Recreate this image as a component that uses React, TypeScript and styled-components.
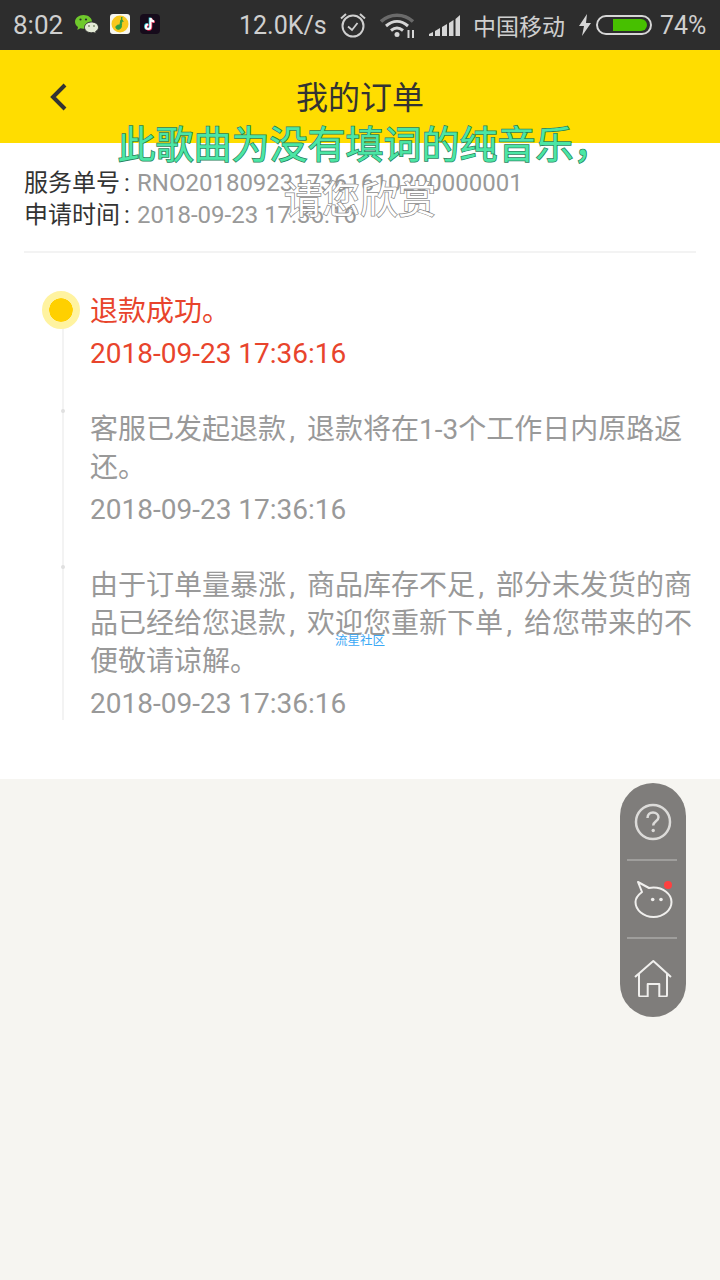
import React from "react";
import styled, { createGlobalStyle } from "styled-components";

const GlobalStyle = createGlobalStyle`
    html, body {
        margin: 0;
        padding: 0;
        background: #f6f5f1;
    }
    body {
        font-family: Roboto, "Noto Sans CJK SC", sans-serif;
    }
`;

const records = [
    {
        active: true,
        text: "退款成功。",
        time: "2018-09-23 17:36:16",
    },
    {
        active: false,
        text: "客服已发起退款,退款将在1-3个工作日内原路返还。",
        time: "2018-09-23 17:36:16",
    },
    {
        active: false,
        text: "由于订单量暴涨,商品库存不足,部分未发货的商品已经给您退款,欢迎您重新下单,给您带来的不便敬请谅解。",
        time: "2018-09-23 17:36:16",
    },
];

// commas on the device sit in a wider slot than a latin comma
const withSpacedCommas = (text: string) =>
    text.split(",").map((part, i, all) => (
        <React.Fragment key={i}>
            {part}
            {i < all.length - 1 ? <Comma>,</Comma> : null}
        </React.Fragment>
    ));

const WeChatIcon = () => (
    <svg width="26" height="24" viewBox="0 0 26 24">
        <path d="M9.500 3C4.800 3 1 6 1 9.800c0 2.200 1.200 4 3 5.200L3.300 18l3.100-1.700c1 .3 2 .4 3.100.4 4.700 0 8.500-3 8.500-6.900S14.200 3 9.500 3z" fill="#6fc92c" />
        <path d="M17.500 10c-3.900 0-7 2.400-7 5.400s3.100 5.400 7 5.400c.8 0 1.500-.1 2.200-.3l2.500 1.300-.6-2.200c1.800-1 2.900-2.500 2.900-4.200 0-3-3.100-5.400-7-5.400z" fill="#e4ead6" stroke="#2d2d2d" strokeWidth="1" />
        <circle cx="6.500" cy="7.500" r="1.100" fill="#2d2d2d" />
        <circle cx="12" cy="7.500" r="1.100" fill="#2d2d2d" />
        <circle cx="15" cy="14" r="0.900" fill="#7b8a66" />
        <circle cx="20" cy="14" r="0.900" fill="#7b8a66" />
    </svg>
);

const QQMusicIcon = () => (
    <svg width="20" height="20" viewBox="0 0 20 20">
        <rect width="20" height="20" rx="3" fill="#f7f7f2" />
        <circle cx="10" cy="10" r="8.500" fill="#f8c81e" />
        <path d="M11.800 3c-.6 2.200-.4 3.400 1.500 4.300-1.300-.2-2.100-.6-2.500-1.200l-.9 5c-2.400-.5-4.200.7-4 2.500.2 1.900 3.400 2.300 4.800.6 1-1.300.7-4 1.100-6.800z" fill="#2f9e44" stroke="#2f9e44" strokeWidth="1" />
    </svg>
);

const TikTokIcon = () => (
    <svg width="20" height="20" viewBox="0 0 20 20">
        <rect width="20" height="20" rx="4" fill="#160b1b" />
        <path d="M10.500 4v8.800a2.300 2.300 0 1 1-2.300-2.300M10.500 4c.3 2 1.600 3.300 3.700 3.500" fill="none" stroke="#36d6e0" strokeWidth="2.200" transform="translate(-.7 -.4)" />
        <path d="M10.500 4v8.800a2.300 2.300 0 1 1-2.300-2.300M10.500 4c.3 2 1.600 3.300 3.700 3.500" fill="none" stroke="#f02a55" strokeWidth="2.200" transform="translate(.7 .5)" />
        <path d="M10.500 4v8.800a2.300 2.300 0 1 1-2.300-2.300M10.500 4c.3 2 1.600 3.300 3.700 3.500" fill="none" stroke="#ffffff" strokeWidth="2" />
    </svg>
);

const AlarmIcon = () => (
    <svg width="28" height="28" viewBox="0 0 28 28" fill="none" stroke="#cfcfcf" strokeWidth="2">
        <circle cx="14" cy="15" r="10.500" />
        <path d="M9 15.500l4 3.500 5.500-7" strokeWidth="1.800" />
        <path d="M2 7.500l5-4.500M26 7.500l-5-4.500" />
    </svg>
);

const WifiIcon = () => (
    <svg width="36" height="26" viewBox="0 0 36 26">
        <path d="M1 9.500C10 1 24 1 33 9.500" fill="none" stroke="#6a6a6a" strokeWidth="3.500" />
        <path d="M6 14c7-6 15-6 22 0" fill="none" stroke="#d6d6d6" strokeWidth="3" />
        <path d="M11 18.500c4-3.300 8-3.300 12 0" fill="none" stroke="#d6d6d6" strokeWidth="3" />
        <circle cx="17" cy="22.500" r="2.500" fill="#d6d6d6" />
        <path d="M28.500 18v8M33 18v8" stroke="#d6d6d6" strokeWidth="2" />
    </svg>
);

const SignalIcon = () => (
    <svg width="31" height="21" viewBox="0 0 31 21" fill="#d6d6d6">
        <path d="M0 21v-2l4-2v4z" />
        <path d="M6 21v-5l5-3v8z" />
        <path d="M13 21v-9l5-3v12z" />
        <path d="M20 21V8l4.500-3v16z" />
        <path d="M26.500 21V4L31 0v21z" />
    </svg>
);

const BoltIcon = () => (
    <svg width="14" height="22" viewBox="0 0 14 22">
        <path d="M9 0L1 12h5l-2 10 9-13H8z" fill="#d6d6d6" />
    </svg>
);

const BackIcon = () => (
    <svg width="20" height="30" viewBox="0 0 20 30">
        <path d="M16 3L4 15l12 12" fill="none" stroke="#333333" strokeWidth="4" />
    </svg>
);

const QuestionIcon = () => (
    <svg width="38" height="38" viewBox="0 0 38 38" fill="none" stroke="#dcdbd9" strokeWidth="2.500">
        <circle cx="19" cy="19" r="17" />
        <path d="M13.500 15c0-3.300 2.400-5.500 5.500-5.500s5.500 2 5.500 4.800c0 3.900-5.300 4.200-5.300 8.200" />
        <circle cx="19.200" cy="27.500" r="1.700" fill="#dcdbd9" stroke="none" />
    </svg>
);

const CatIcon = () => (
    <svg width="40" height="38" viewBox="0 0 40 38" fill="none" stroke="#f0efed" strokeWidth="2">
        <path d="M5 1l4 10C5 14 2.500 17 2.500 21c0 8 8 15 18 15s18-7 18-15-8.500-14.500-18-14.500c-1.500 0-3 .2-4.500.5z" strokeLinejoin="round" />
        <circle cx="19.700" cy="18.500" r="1.800" fill="#f0efed" stroke="none" />
        <circle cx="28" cy="18.500" r="1.800" fill="#f0efed" stroke="none" />
    </svg>
);

const HomeIcon = () => (
    <svg width="38" height="38" viewBox="0 0 38 38" fill="none" stroke="#f0efed" strokeWidth="2" strokeLinejoin="round">
        <path d="M1 18L19.300 2 37 18" />
        <path d="M5 14.500V36a1.500 1.500 0 0 0 1.500 1.500h7.200V25h11.600v12.500h6.200A1.500 1.500 0 0 0 33 36V14.500" />
    </svg>
);

const App = () => {
    return (
        <Screen>
            <GlobalStyle />
            <StatusBar>
                <StatusTime>8:02</StatusTime>
                <NotifyIcons>
                    <WeChatIcon />
                    <QQMusicIcon />
                    <TikTokIcon />
                </NotifyIcons>
                <NetSpeed>12.0K/s</NetSpeed>
                <StatusRight>
                    <AlarmIcon />
                    <WifiIcon />
                    <SignalIcon />
                    <Carrier>中国移动</Carrier>
                    <BatteryGroup>
                        <BoltIcon />
                        <Battery>
                            <BatteryLevel />
                        </Battery>
                    </BatteryGroup>
                    <StatusPercent>74%</StatusPercent>
                </StatusRight>
            </StatusBar>

            <TitleBar>
                <BackButton>
                    <BackIcon />
                </BackButton>
                <Title>我的订单</Title>
            </TitleBar>

            <Card>
                <OrderInfo>
                    <InfoRow>
                        <InfoLabel>服务单号 :</InfoLabel>
                        <InfoValue>RNO2018092317361610200000001</InfoValue>
                    </InfoRow>
                    <InfoRow>
                        <InfoLabel>申请时间 :</InfoLabel>
                        <InfoValue>2018-09-23 17:36:16</InfoValue>
                    </InfoRow>
                </OrderInfo>

                <Timeline>
                    {records.map((record, i) => (
                        <Step key={i}>
                            {record.active ? <ActiveDot /> : <SmallDot />}
                            <StepText $active={record.active}>{withSpacedCommas(record.text)}</StepText>
                            <StepTime $active={record.active}>{record.time}</StepTime>
                        </Step>
                    ))}
                </Timeline>
            </Card>

            <FloatMenu>
                <MenuCell>
                    <QuestionIcon />
                </MenuCell>
                <MenuCell>
                    <CatIcon />
                    <RedDot />
                </MenuCell>
                <MenuCell>
                    <HomeIcon />
                </MenuCell>
            </FloatMenu>

            <Lyrics>
                <LyricLine $current>此歌曲为没有填词的纯音乐，</LyricLine>
                <LyricLine>请您欣赏</LyricLine>
            </Lyrics>
            <Watermark>流星社区</Watermark>
        </Screen>
    );
};

const Screen = styled.div`
    position: relative;
    width: 720px;
    height: 1280px;
    overflow: hidden;
    background-color: #f6f5f1;
`;
const StatusBar = styled.div`
    height: 50px;
    display: flex;
    align-items: center;
    padding: 0 12px 0 13px;
    box-sizing: border-box;
    background-color: #2d2d2d;
    color: #cfcfcf;
    font-size: 25px;
`;
const StatusTime = styled.span`
    width: 61px;
    font-size: 26px;
`;
const NotifyIcons = styled.div`
    display: flex;
    align-items: center;
    gap: 10px;
    width: 165px;
    margin-bottom: 3px;
`;
const NetSpeed = styled.span`
    width: 101px;
`;
const StatusRight = styled.div`
    display: flex;
    align-items: center;
    gap: 13px;
    flex: 1;
    margin-left: -1px;
`;
const Carrier = styled.span`
    font-size: 23px;
    white-space: nowrap;
`;
const BatteryGroup = styled.div`
    display: flex;
    align-items: center;
    gap: 4px;
`;
const Battery = styled.div`
    width: 56px;
    height: 20px;
    box-sizing: border-box;
    padding: 2px 3px 2px 15px;
    border: 2px solid #d6d6d6;
    border-radius: 10px;
`;
const BatteryLevel = styled.div`
    height: 100%;
    background-color: #47c000;
    border-radius: 0 6px 6px 0;
`;
const StatusPercent = styled.span`
    margin-left: -5px;
`;
const TitleBar = styled.div`
    position: relative;
    height: 93px;
    display: flex;
    align-items: center;
    justify-content: center;
    background-color: #ffdd00;
`;
const BackButton = styled.div`
    position: absolute;
    left: 49px;
    top: 32px;
    display: flex;
`;
const Title = styled.h1`
    margin: 0 0 3px;
    font-size: 32px;
    font-weight: 400;
    color: #333333;
`;
const Card = styled.div`
    height: 636px;
    padding: 24px 24px 0;
    box-sizing: border-box;
    background-color: #ffffff;
`;
const OrderInfo = styled.div`
    height: 84px;
    border-bottom: 2px solid #f3f3f3;
`;
const InfoRow = styled.div`
    display: flex;
    height: 32px;
    line-height: 32px;
    font-size: 24px;
`;
const InfoLabel = styled.span`
    width: 113px;
    color: #333333;
    white-space: nowrap;
    word-spacing: -2px;
`;
const InfoValue = styled.span`
    color: #999999;
`;
const Timeline = styled.div`
    position: relative;
    display: flex;
    flex-direction: column;
    gap: 38px;
    margin-top: 40px;
    padding-left: 66px;

    &::before {
        content: "";
        position: absolute;
        left: 38px;
        top: 0;
        bottom: 3px;
        width: 2px;
        background-color: #f3f3f3;
    }
`;
const Step = styled.div`
    position: relative;
`;
const ActiveDot = styled.span`
    position: absolute;
    left: -48px;
    top: -2px;
    width: 24px;
    height: 24px;
    border: 7px solid #fff3a0;
    border-radius: 50%;
    background-color: #ffd000;
    background-clip: padding-box;
`;
const SmallDot = styled.span`
    position: absolute;
    left: -29px;
    top: -2px;
    width: 4px;
    height: 4px;
    border-radius: 50%;
    background-color: #e0e0e0;
`;
const StepText = styled.div<{ $active: boolean }>`
    font-size: 28px;
    line-height: 38px;
    color: ${(p) => (p.$active ? "#e8442c" : "#999999")};
`;
const StepTime = styled.div<{ $active: boolean }>`
    margin-top: 4px;
    font-size: 28px;
    line-height: 38px;
    color: ${(p) => (p.$active ? "#e8442c" : "#999999")};
`;
const Comma = styled.span`
    padding: 0 12px 0 3.500px;
`;
const FloatMenu = styled.div`
    position: absolute;
    left: 620px;
    top: 783px;
    width: 66px;
    height: 234px;
    display: flex;
    flex-direction: column;
    border-radius: 33px;
    background-color: #7f7d7b;
`;
const MenuCell = styled.div`
    position: relative;
    flex: 1;
    display: flex;
    align-items: center;
    justify-content: center;

    &:not(:last-child)::after {
        content: "";
        position: absolute;
        left: 7px;
        right: 9px;
        bottom: 0;
        height: 2px;
        background-color: #9f9e9c;
    }
`;
const RedDot = styled.span`
    position: absolute;
    left: 44px;
    top: 20px;
    width: 8px;
    height: 8px;
    border-radius: 50%;
    background-color: #ff4040;
`;
const Lyrics = styled.div`
    position: absolute;
    left: 0;
    top: 118px;
    width: 720px;
    display: flex;
    flex-direction: column;
    align-items: center;
`;
const LyricLine = styled.div<{ $current?: boolean }>`
    height: 55px;
    margin-left: ${(p) => (p.$current ? "9px" : "0")};
    line-height: 55px;
    font-size: 38px;
    white-space: nowrap;
    color: ${(p) => (p.$current ? "#4be6a5" : "#ffffff")};
    -webkit-text-stroke: ${(p) => (p.$current ? "1.5px #2b7f5c" : "1.5px #8a8a8a")};
    paint-order: stroke fill;
`;
const Watermark = styled.div`
    position: absolute;
    left: 0;
    top: 632px;
    width: 720px;
    text-align: center;
    font-size: 12.500px;
    line-height: 17px;
    color: #3aa8f5;
`;

export default App;
